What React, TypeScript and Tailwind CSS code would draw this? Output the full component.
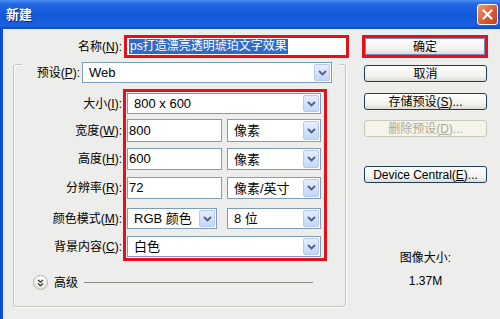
import type { ReactNode } from "react";

function cn(...parts: (string | false | undefined)[]) {
  return parts.filter(Boolean).join(" ");
}

// label like 名称(N):
function Mn({ text, k, tail = ":" }: { text: string; k: string; tail?: string }) {
  return (
    <>
      {text}(<span className="underline underline-offset-[1px]">{k}</span>){tail}
    </>
  );
}

function Arrow() {
  return (
    <span className="flex h-full w-[16px] shrink-0 items-center justify-center rounded-[2px] border border-[#b5c9f3] bg-[linear-gradient(to_bottom,#e6eefd,#c4d6fb)]">
      <svg width="9" height="6" viewBox="0 0 9 6">
        <path d="M1 1l3.5 3.5L8 1" stroke="#4d6185" strokeWidth="1.8" fill="none" />
      </svg>
    </span>
  );
}

function Select({ value, className }: { value: string; className: string }) {
  return (
    <div className={cn("flex items-center border border-[#7f9db9] bg-white p-px", className)}>
      <span className="flex-1 truncate pl-[5px] text-[13px] leading-none text-black">{value}</span>
      <Arrow />
    </div>
  );
}

function TextBox({ value, className }: { value: string; className: string }) {
  return (
    <div className={cn("flex items-center border border-[#7f9db9] bg-white pl-[1px] text-[13px] text-black", className)}>
      {value}
    </div>
  );
}

function XPButton({ children, disabled, className }: { children: ReactNode; disabled?: boolean; className?: string }) {
  return (
    <div
      className={cn(
        "flex h-[17px] w-[123px] items-center justify-center rounded-[3px] border text-[12px] leading-none",
        disabled
          ? "border-[#c9c7ba] bg-[#f5f4ea] text-[#aca899]"
          : "border-[#1c3c64] bg-[linear-gradient(to_bottom,#ffffff,#f1f1ec_70%,#dcdcd4)] text-black",
        className,
      )}
    >
      {children}
    </div>
  );
}

export default function App() {
  return (
    <div className="flex h-[319px] w-[500px] flex-col overflow-hidden bg-[#ededeb] font-['Liberation_Sans','Noto_Sans_CJK_SC',sans-serif] text-[12px] text-black">
      {/* title bar */}
      <div className="flex h-[29px] shrink-0 items-center justify-between bg-[linear-gradient(to_bottom,#4a8ff2_0%,#2467e3_14%,#1358d9_55%,#1b60de_88%,#0b48c6_100%)] pl-[6px] pr-[2px]">
        <span className="text-[13px] font-bold text-white [text-shadow:1px_1px_0_#0a2a7a]">新建</span>
        <div className="flex h-[21px] w-[21px] items-center justify-center rounded-[3px] border border-white bg-[linear-gradient(135deg,#f09a78,#dc5a32_55%,#c23f17)]">
          <svg width="11" height="11" viewBox="0 0 11 11">
            <path d="M1.5 1.5l8 8M9.5 1.5l-8 8" stroke="#fff" strokeWidth="2.2" strokeLinecap="round" />
          </svg>
        </div>
      </div>

      {/* body */}
      <div className="flex flex-1 border-l-[3px] border-[#0c4bd4]">
        {/* left column */}
        <div className="w-[347px] shrink-0 pl-[9px]">
          <div className="mt-[6px] flex items-center">
            <div className="w-[112px] pr-[2px] text-right">
              <Mn text="名称" k="N" />
            </div>
            <div className="h-[23px] w-[225px] border-[3px] border-[#e2121b] bg-white pl-[2px]">
              <div className="flex h-full items-center">
                <span className="bg-[#316ac5] px-px text-[12px] leading-[15px] text-white">ps打造漂亮透明琥珀文字效果</span>
              </div>
            </div>
          </div>

          <div className="ml-[1px] mt-[6px] w-[333px] rounded-[3px] border border-[#c4c4bc] pb-[16px] shadow-[inset_1px_1px_0_#fff,1px_1px_0_#fff]">
            {/* preset, sitting on the group border */}
            <div className="-mt-[3px] ml-[8px] flex w-[318px] items-center bg-[#ededeb] pr-[8px]">
              <div className="w-[60px] pr-[2px] text-right">
                <Mn text="预设" k="P" />
              </div>
              <Select value="Web" className="h-[21px] w-[250px]" />
            </div>

            <div className="mt-[6px] flex">
              <div className="w-[109px] shrink-0 pr-[1px] pt-[4px] text-right">
                <div className="flex h-[21px] items-center justify-end"><Mn text="大小" k="I" /></div>
                <div className="mt-[5px] flex h-[23px] items-center justify-end"><Mn text="宽度" k="W" /></div>
                <div className="mt-[6px] flex h-[22px] items-center justify-end"><Mn text="高度" k="H" /></div>
                <div className="mt-[7px] flex h-[22px] items-center justify-end"><Mn text="分辨率" k="R" /></div>
                <div className="mt-[9px] flex h-[21px] items-center justify-end"><Mn text="颜色模式" k="M" /></div>
                <div className="mt-[7px] flex h-[21px] items-center justify-end"><Mn text="背景内容" k="C" /></div>
              </div>

              <div className="w-[204px] shrink-0 border-[3px] border-[#e2121b] pb-[1px] pl-[1px] pr-[3px] pt-[1px]">
                <Select value="800 x 600" className="h-[21px] w-[194px]" />
                <div className="mt-[5px] flex h-[23px] gap-[5px]">
                  <TextBox value="800" className="w-[95px]" />
                  <Select value="像素" className="w-[94px]" />
                </div>
                <div className="mt-[6px] flex h-[22px] gap-[5px]">
                  <TextBox value="600" className="w-[95px]" />
                  <Select value="像素" className="w-[94px]" />
                </div>
                <div className="mt-[7px] flex h-[22px] gap-[5px]">
                  <TextBox value="72" className="w-[95px]" />
                  <Select value="像素/英寸" className="w-[94px]" />
                </div>
                <div className="mt-[9px] flex h-[21px] gap-[10px]">
                  <Select value="RGB 颜色" className="w-[90px]" />
                  <Select value="8 位" className="w-[94px]" />
                </div>
                <Select value="白色" className="mt-[7px] h-[21px] w-[194px]" />
              </div>
            </div>

            <div className="ml-[19px] mr-[32px] mt-[14px] flex h-[15px] items-center gap-[6px]">
              <div className="flex h-[15px] w-[15px] shrink-0 items-center justify-center rounded-full border border-[#b4b4ac] bg-[linear-gradient(to_bottom,#ffffff,#e2e2dc)]">
                <svg width="7" height="8" viewBox="0 0 7 8">
                  <path d="M1 1l2.5 2.2L6 1M1 4.5l2.5 2.2L6 4.5" stroke="#333" strokeWidth="1.2" fill="none" />
                </svg>
              </div>
              <span className="shrink-0">高级</span>
              <div className="h-[2px] flex-1 border-t border-[#8c8c84]" />
            </div>
          </div>
        </div>

        {/* right column */}
        <div className="ml-[12px] flex w-[127px] shrink-0 flex-col">
          <div className="mt-[6px] h-[23px] w-[126px] border-[3px] border-[#e2121b]">
            <div className="flex h-full items-center justify-center border border-[#6a8ad0] bg-[linear-gradient(to_bottom,#ffffff,#f1f1ec_70%,#dcdcd4)] text-[12px] leading-none">
              确定
            </div>
          </div>
          <XPButton className="ml-[2px] mt-[7px]">取消</XPButton>
          <XPButton className="ml-[2px] mt-[11px]">
            存储预设(<span className="underline">S</span>)...
          </XPButton>
          <XPButton disabled className="ml-[2px] mt-[10px]">
            删除预设(<span className="underline">D</span>)...
          </XPButton>
          <XPButton className="ml-[2px] mt-[29px]">
            Device Central(<span className="underline">E</span>)...
          </XPButton>
          <div className="mt-[67px] text-center leading-[16px]">图像大小:</div>
          <div className="mt-[7px] text-center leading-[16px]">1.37M</div>
        </div>
      </div>
    </div>
  );
}
